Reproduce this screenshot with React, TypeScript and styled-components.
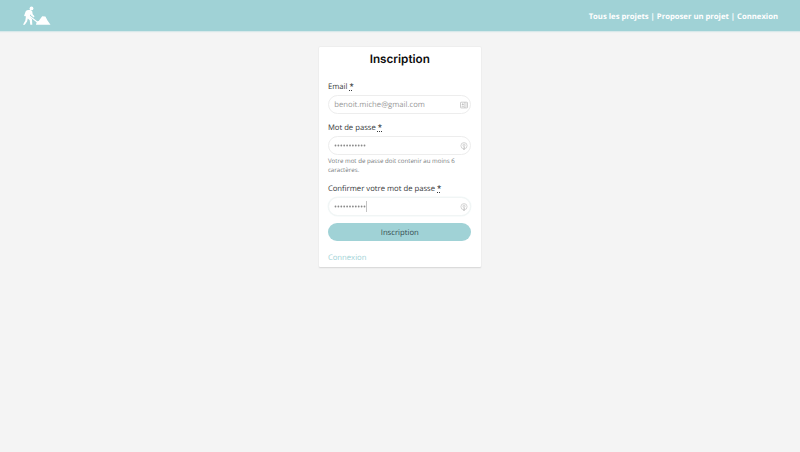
import React from "react";
import styled, { createGlobalStyle } from "styled-components";

const GlobalStyle = createGlobalStyle`
  * { box-sizing: border-box; }
  html, body { margin: 0; padding: 0; }
  body {
    background: #f4f4f4;
    font-family: "Open Sans", "Noto Sans", sans-serif;
    color: #373a3c;
    overflow: hidden;
    text-rendering: geometricPrecision;
  }
`;

const Page = styled.div`
  height: 452px;
  display: flex;
  flex-direction: column;
  align-items: center;
  background: #f4f4f4;
`;

const Header = styled.header`
  width: 100%;
  height: 31px;
  flex: none;
  display: flex;
  align-items: center;
  justify-content: space-between;
  padding: 0 22px 0 23px;
  background: #a0d2d6;
  box-shadow: 0 1px 1px rgba(160, 210, 214, 0.35);
`;

const Logo = styled.svg`
  display: block;
  width: 28px;
  height: 20px;
`;

const Nav = styled.nav`
  display: flex;
  gap: 2px;
  padding-top: 2.5px;
  font-size: 7.7px;
  line-height: 12px;
  font-weight: 700;
  color: #fff;
`;

const NavLink = styled.a`
  color: #fff;
  white-space: nowrap;
`;

const Card = styled.main`
  width: 162px;
  height: 220px;
  margin: 16px 1px 0 0;
  padding: 0 9.5px 0 9px;
  display: flex;
  flex-direction: column;
  background: #fff;
  border-radius: 1px;
  box-shadow: 0 0.5px 1.5px rgba(0, 0, 0, 0.13);
`;

const Title = styled.h1`
  margin: 4px 0 0;
  height: 16px;
  padding-left: 1px;
  text-align: center;
  font-family: Inter, "Open Sans", sans-serif;
  font-size: 11.7px;
  line-height: 16px;
  font-weight: 600;
  letter-spacing: 0;
  color: #0c0c0c;
`;

const Label = styled.label<{ $top: number }>`
  margin-top: ${(p) => p.$top}px;
  padding-left: 0.4px;
  height: 12px;
  font-size: 7.7px;
  line-height: 12px;
  white-space: nowrap;
`;

const Required = styled.abbr`
  font-weight: 600;
  text-decoration: underline dotted 0.6px;
  text-underline-offset: 0.5px;
`;

const Field = styled.div<{ $focused?: boolean }>`
  margin-top: 2px;
  height: 19px;
  flex: none;
  display: flex;
  align-items: center;
  justify-content: space-between;
  padding: 0 2.5px 0 5.5px;
  border: 1px solid ${(p) => (p.$focused ? "#f1f5f5" : "#ededed")};
  border-radius: 10px;
  background: #fff;
  box-shadow: ${(p) => (p.$focused ? "0 0 1px 0.5px #f1f8f8" : "none")};
`;

const Value = styled.span`
  padding-left: 0.3px;
  font-size: 7.7px;
  line-height: 12px;
  color: #999;
`;

const Secret = styled.span`
  display: flex;
  align-items: center;
  height: 11px;
`;

const Dots = styled.svg`
  display: block;
  width: 32px;
  height: 3px;
`;

const Caret = styled.span`
  width: 1px;
  height: 11px;
  background: #c4c4c4;
`;

const FieldIcon = styled.svg`
  display: block;
  width: 8px;
  height: 8px;
`;

const Hint = styled.small`
  margin-top: 1px;
  padding-left: 0.4px;
  height: 18px;
  flex: none;
  font-size: 6.15px;
  line-height: 9px;
  color: #777b7e;
  white-space: nowrap;
`;

const Submit = styled.button`
  margin: 7px 0 0;
  height: 18px;
  flex: none;
  padding: 1px 0 0 1px;
  border: 0;
  border-radius: 9px;
  background: #a0d2d6;
  font-family: inherit;
  font-size: 7.7px;
  line-height: 18px;
  color: #344b50;
  text-rendering: inherit;
`;

const SignIn = styled.a`
  margin-top: 10.6px;
  padding-left: 0.4px;
  font-size: 7.7px;
  line-height: 12px;
  color: #a0d2d6;
`;

const ROW = Array.from({ length: 11 }, (_, i) => 1.5 + i * 2.9);

function Bullets() {
  return (
    <Dots viewBox="0 0 32 3">
      {ROW.map((x) => (
        <circle key={x} cx={x} cy="1.5" r="0.9" fill="#8a8a8a" />
      ))}
    </Dots>
  );
}

function KeyIcon() {
  return (
    <FieldIcon viewBox="0 0 8 8" fill="none" stroke="#c0c0c0" strokeWidth="0.65">
      <circle cx="4" cy="3.7" r="3.1" />
      <circle cx="4" cy="3.2" r="1.1" />
      <path d="M4 4.2v3.2M4 5.6h1M3 7.4h2" />
    </FieldIcon>
  );
}

function CardIcon() {
  return (
    <FieldIcon viewBox="0 0 8 8" fill="none" stroke="#b8b8b8" strokeWidth="0.7">
      <rect x="0.5" y="1.2" width="7" height="5.7" rx="0.5" />
      <circle cx="2.8" cy="3.3" r="0.6" fill="#b8b8b8" />
      <path d="M1.6 5.3h2.5M4.9 1.2v5.7M5.7 3h1.2M5.7 5h1.2" />
    </FieldIcon>
  );
}

export default function App() {
  return (
    <>
      <GlobalStyle />
      <Page>
        <Header>
          <Logo viewBox="0 0 28 20" fill="#fff">
            <circle cx="8.5" cy="2.4" r="1.9" />
            <path d="M3.8 4.3 7.3 3.7 9.2 5.2 9.7 8.3 11.5 10.3 10.8 11.5 8.1 9.6 7.4 8.2 6.8 10.3 9 13.2 9.3 18.8H7.3L6.7 14.2 4.8 12.4 4.1 15.4 1.8 18.8H0L2.3 14.5 3 9.7 2.3 10.6 1.1 9.7 2.6 5.6Z" />
            <path d="M5.8 8.7 14.2 15.2 15.7 15 19.2 10.2 22.4 10.5 24.5 14.6 27.5 18.8H13L13.6 16.3 5.1 9.7Z" />
          </Logo>
          <Nav>
            <NavLink>Tous les projets</NavLink>
            <span>|</span>
            <NavLink>Proposer un projet</NavLink>
            <span>|</span>
            <NavLink>Connexion</NavLink>
          </Nav>
        </Header>
        <Card>
          <Title>Inscription</Title>
          <Label $top={14}>
            Email <Required>*</Required>
          </Label>
          <Field>
            <Value>benoit.miche@gmail.com</Value>
            <CardIcon />
          </Field>
          <Label $top={8}>
            Mot de passe <Required>*</Required>
          </Label>
          <Field>
            <Secret><Bullets /></Secret>
            <KeyIcon />
          </Field>
          <Hint>
            Votre mot de passe doit contenir au moins 6
            <br />
            caractères.
          </Hint>
          <Label $top={9}>
            Confirmer votre mot de passe <Required>*</Required>
          </Label>
          <Field $focused>
            <Secret><Bullets /><Caret /></Secret>
            <KeyIcon />
          </Field>
          <Submit>Inscription</Submit>
          <SignIn>Connexion</SignIn>
        </Card>
      </Page>
    </>
  );
}
